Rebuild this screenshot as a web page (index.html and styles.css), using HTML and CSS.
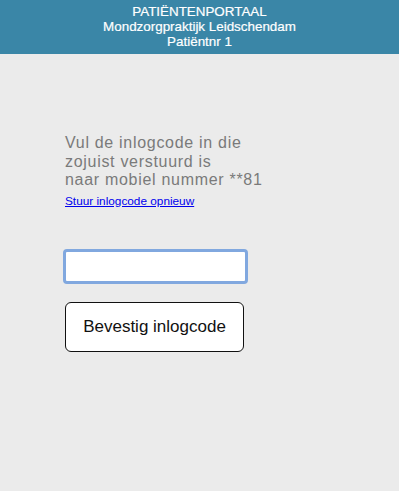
FILE: index.html
```html
<!DOCTYPE html>
<html lang="nl">
<head>
  <meta charset="UTF-8">
  <meta name="viewport" content="width=device-width, initial-scale=1.0">
  <title>Patiëntenportaal</title>
  <link rel="stylesheet" href="styles.css">
</head>
<body>
  <div class="header">
    <div>PATIËNTENPORTAAL</div>
    <div>Mondzorgpraktijk Leidschendam</div>
    <div>Patiëntnr 1</div>
  </div>
  <div class="content">
    <p class="uitleg">Vul de inlogcode in die<br>zojuist verstuurd is<br>naar mobiel nummer **81</p>
    <a class="opnieuw" href="#">Stuur inlogcode opnieuw</a>
    <input type="text" class="code" id="code">
    <button class="bevestig">Bevestig inlogcode</button>
  </div>
</body>
</html>
```

FILE: styles.css
```css
body {
  font-family: 'Liberation Sans', Arial, sans-serif;
  background-color: #ebebeb;
  margin: 0;
  padding: 0;
}
.header {
  background-color: #3a86a7;
  color: #fff;
  text-align: center;
  font-size: 13.4px;
  line-height: 15px;
  padding: 4px 0 5px;
  -webkit-text-stroke: 0.2px #fff;
}
.content {
  padding: 80px 0 0 65px;
  display: flex;
  flex-direction: column;
  align-items: flex-start;
}
.uitleg {
  margin: 0;
  font-size: 16px;
  letter-spacing: 0.7px;
  line-height: 18.5px;
  color: #7a7a7a;
}
.opnieuw {
  font-size: 11.8px;
  color: #0000ee;
  margin-top: 4px;
}
.code {
  margin: 41px 0 0 -2px;
  width: 185px;
  height: 35px;
  box-sizing: border-box;
  border: 3px solid #81a8df;
  border-radius: 4px;
  background: #fff;
  outline: none;
}
.bevestig {
  margin-top: 18px;
  width: 179px;
  height: 50px;
  background: #fff;
  border: 1px solid #111;
  border-radius: 6px;
  font-family: 'Liberation Sans', Arial, sans-serif;
  font-size: 17px;
  color: #111;
}
```
